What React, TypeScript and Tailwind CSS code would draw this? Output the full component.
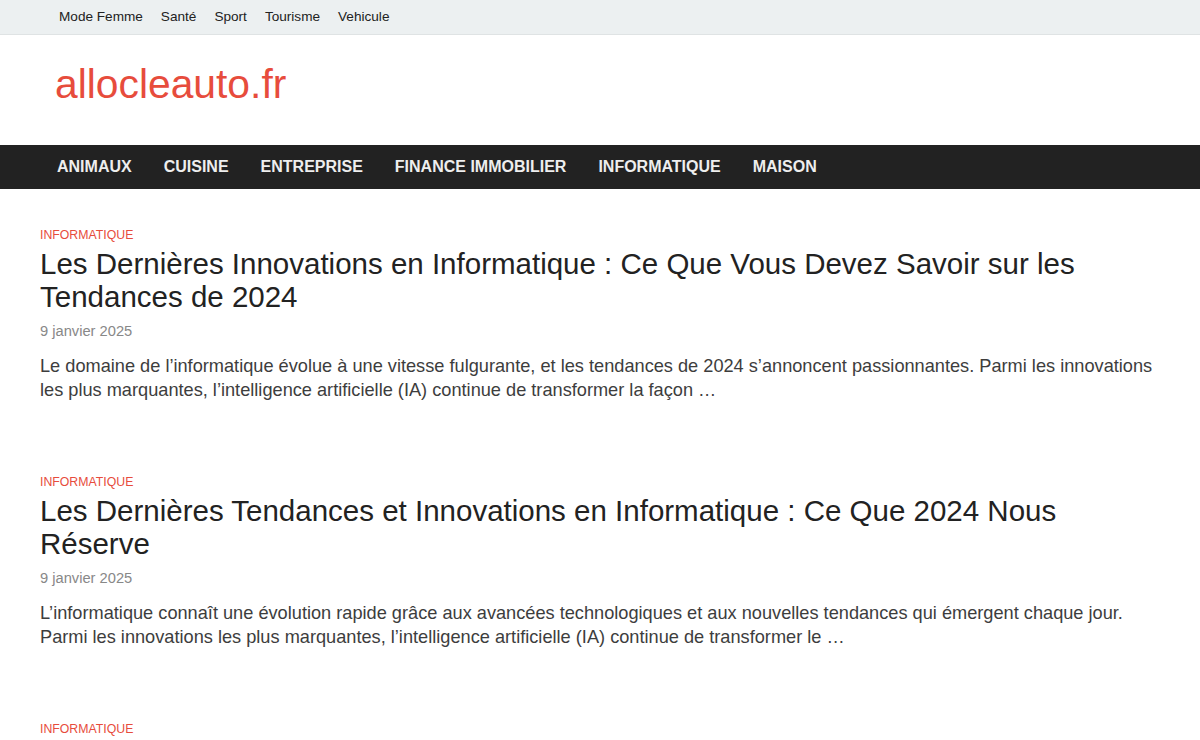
import React from 'react';

const topLinks = ['Mode Femme', 'Santé', 'Sport', 'Tourisme', 'Vehicule'];
const navLinks = ['Animaux', 'Cuisine', 'Entreprise', 'Finance Immobilier', 'Informatique', 'Maison'];

const posts = [
  {
    cat: 'Informatique',
    title: 'Les Dernières Innovations en Informatique : Ce Que Vous Devez Savoir sur les Tendances de 2024',
    date: '9 janvier 2025',
    excerpt:
      'Le domaine de l’informatique évolue à une vitesse fulgurante, et les tendances de 2024 s’annoncent passionnantes. Parmi les innovations les plus marquantes, l’intelligence artificielle (IA) continue de transformer la façon …',
  },
  {
    cat: 'Informatique',
    title: 'Les Dernières Tendances et Innovations en Informatique : Ce Que 2024 Nous Réserve',
    date: '9 janvier 2025',
    excerpt:
      'L’informatique connaît une évolution rapide grâce aux avancées technologiques et aux nouvelles tendances qui émergent chaque jour. Parmi les innovations les plus marquantes, l’intelligence artificielle (IA) continue de transformer le …',
  },
  {
    cat: 'Informatique',
    title: 'Comment Choisir le Meilleur Ordinateur Portable pour Vos Besoins en 2024',
    date: '9 janvier 2025',
    excerpt:
      'Choisir un ordinateur portable peut sembler compliqué face à la multitude de modèles disponibles sur le marché.',
  },
];

function PostCard({ post }: { post: (typeof posts)[number] }) {
  return (
    <article className="pb-[72px]">
      <a className="block text-[12.3px] leading-[16px] uppercase text-[#e74c3c]">{post.cat}</a>
      <h2 className="mt-[4px] text-[29.5px] leading-[33px] text-[#222] font-normal">
        <a>{post.title}</a>
      </h2>
      <div className="mt-[8px] text-[14.7px] leading-[20px] text-[#888]">{post.date}</div>
      <p className="mt-[13px] text-[18.2px] leading-[24px] text-[#3d3d3d]">{post.excerpt}</p>
    </article>
  );
}

export default function App() {
  return (
    <div className="h-[740px] overflow-hidden bg-white font-['Liberation_Sans',Arial,sans-serif]">
      {/* top bar */}
      <div className="h-[35px] bg-[#ecf0f1] border-b border-[#dfe3e4]">
        <ul className="flex items-center h-full pl-[59px] gap-[18px] text-[13.6px] text-[#222]">
          {topLinks.map(l => (
            <li key={l}>
              <a>{l}</a>
            </li>
          ))}
        </ul>
      </div>

      {/* header */}
      <header className="h-[110px] flex items-center pl-[55px]">
        <a className="text-[40.8px] leading-none text-[#e74c3c] -mt-[12px]">allocleauto.fr</a>
      </header>

      {/* main nav */}
      <nav className="h-[44px] bg-[#222]">
        <ul className="flex items-center h-full pl-[57px] gap-[32px] text-[16px] font-bold uppercase text-[#eee]">
          {navLinks.map(l => (
            <li key={l}>
              <a>{l}</a>
            </li>
          ))}
        </ul>
      </nav>

      {/* content */}
      <main className="pt-[38px] pl-[40px] pr-[40px]">
        {posts.map((p, i) => (
          <PostCard key={i} post={p} />
        ))}
      </main>
    </div>
  );
}
